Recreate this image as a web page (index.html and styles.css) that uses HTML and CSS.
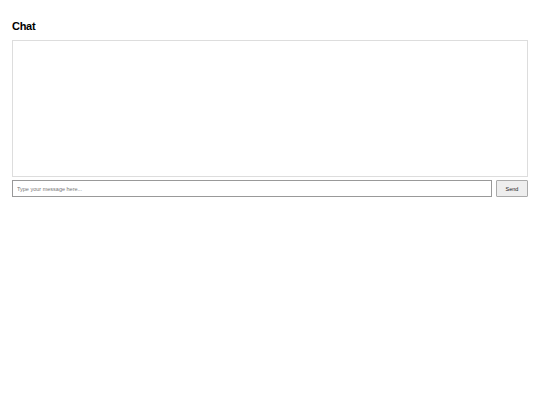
FILE: index.html
```html
<!DOCTYPE html>
<html>
<head>
<meta charset="utf-8">
<link rel="stylesheet" href="styles.css">
</head>
<body>
<div class="page">
  <h1 class="title">Chat</h1>
  <div class="chat-box"></div>
  <div class="input-row">
    <input class="msg-input" type="text" placeholder="Type your message here...">
    <button class="send-btn">Send</button>
  </div>
</div>
</body>
</html>
```
FILE: styles.css
```css
html, body {
  margin: 0;
  padding: 0;
  background: #fff;
  font-family: "Liberation Sans", Arial, sans-serif;
}
.page {
  padding: 12px;
}
.title {
  margin: 8px 0 8px 0;
  font-size: 11px;
  line-height: 12px;
  font-weight: bold;
  letter-spacing: -0.3px;
  color: #000;
}
.chat-box {
  height: 135px;
  border: 1px solid #ddd;
  box-sizing: content-box;
}
.input-row {
  display: flex;
  gap: 4px;
  margin-top: 3px;
}
.msg-input {
  flex: 1;
  height: 17px;
  box-sizing: border-box;
  border: 1px solid #999;
  padding: 0 4px;
  font-family: "Liberation Sans", Arial, sans-serif;
  font-size: 5.5px;
  margin: 0;
  outline: none;
}
.msg-input::placeholder {
  color: #777;
}
.send-btn {
  width: 32px;
  height: 17px;
  box-sizing: border-box;
  border: 1px solid #aaa;
  background: #eee;
  font-family: "Liberation Sans", Arial, sans-serif;
  font-size: 5.5px;
  color: #222;
  padding: 0;
  margin: 0;
  border-radius: 1px;
}
```
